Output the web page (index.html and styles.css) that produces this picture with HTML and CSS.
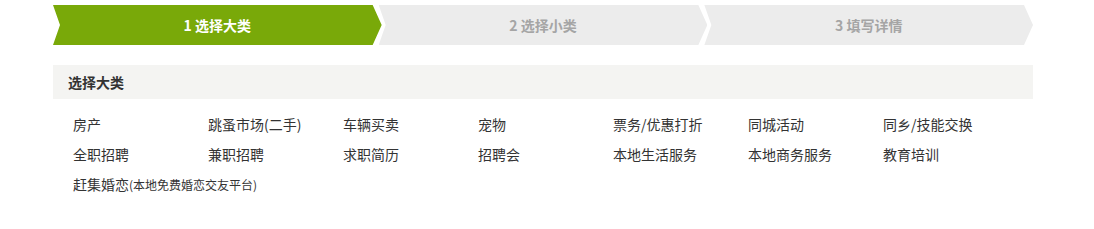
FILE: index.html
```html
<!DOCTYPE HTML>
<html>
<head>
<meta charset="utf-8">
<title>发布信息</title>
<link rel="stylesheet" href="styles.css">
</head>
<body>
<div class="wrap">
    <ul class="steps">
        <li class="step active">1 选择大类</li>
        <li class="step">2 选择小类</li>
        <li class="step">3 填写详情</li>
    </ul>
    <div class="box">
        <h3 class="box-title">选择大类</h3>
        <ul class="cats">
            <li><a href="#">房产</a></li>
            <li><a href="#">跳蚤市场(二手)</a></li>
            <li><a href="#">车辆买卖</a></li>
            <li><a href="#">宠物</a></li>
            <li><a href="#">票务/优惠打折</a></li>
            <li><a href="#">同城活动</a></li>
            <li><a href="#">同乡/技能交换</a></li>
            <li><a href="#">全职招聘</a></li>
            <li><a href="#">兼职招聘</a></li>
            <li><a href="#">求职简历</a></li>
            <li><a href="#">招聘会</a></li>
            <li><a href="#">本地生活服务</a></li>
            <li><a href="#">本地商务服务</a></li>
            <li><a href="#">教育培训</a></li>
            <li class="wide"><a href="#">赶集婚恋<small>(本地免费婚恋交友平台)</small></a></li>
        </ul>
    </div>
</div>
</body>
</html>
```

FILE: styles.css
```css
html, body {
    margin: 0;
    padding: 0;
    background: #fff;
}
body {
    font-family: "Noto Sans CJK SC", "Liberation Sans", sans-serif;
    font-size: 14px;
    color: #333;
}
.wrap {
    width: 980px;
    margin-left: 53px;
    padding-top: 5px;
}
.steps {
    list-style-type: none;
    margin: 0 0 20px 0;
    padding: 0;
    display: flex;
}
.step {
    flex: 1;
    height: 40px;
    line-height: 40px;
    text-align: center;
    font-weight: bold;
    font-size: 14px;
    color: #a5a5a5;
    background: #ececec;
    margin-left: -3px;
    clip-path: polygon(0 0, calc(100% - 9px) 0, 100% 50%, calc(100% - 9px) 100%, 0 100%, 7px 50%);
}
.step:first-child {
    margin-left: 0;
}
.step.active {
    background: #79a909;
    color: #fff;
}
.box-title {
    margin: 0;
    height: 34px;
    line-height: 34px;
    padding-left: 15px;
    background: #f4f4f2;
    font-size: 14px;
    font-weight: bold;
    color: #333;
}
.cats {
    list-style-type: none;
    margin: 0;
    padding: 10px 0 0 20px;
    display: grid;
    grid-template-columns: repeat(7, 135px);
}
.cats li {
    height: 30px;
    line-height: 30px;
    white-space: nowrap;
}
.cats li.wide {
    grid-column: 1 / span 3;
}
.cats a {
    color: #333;
    text-decoration: none;
}
.cats small {
    font-size: 12px;
}
```
